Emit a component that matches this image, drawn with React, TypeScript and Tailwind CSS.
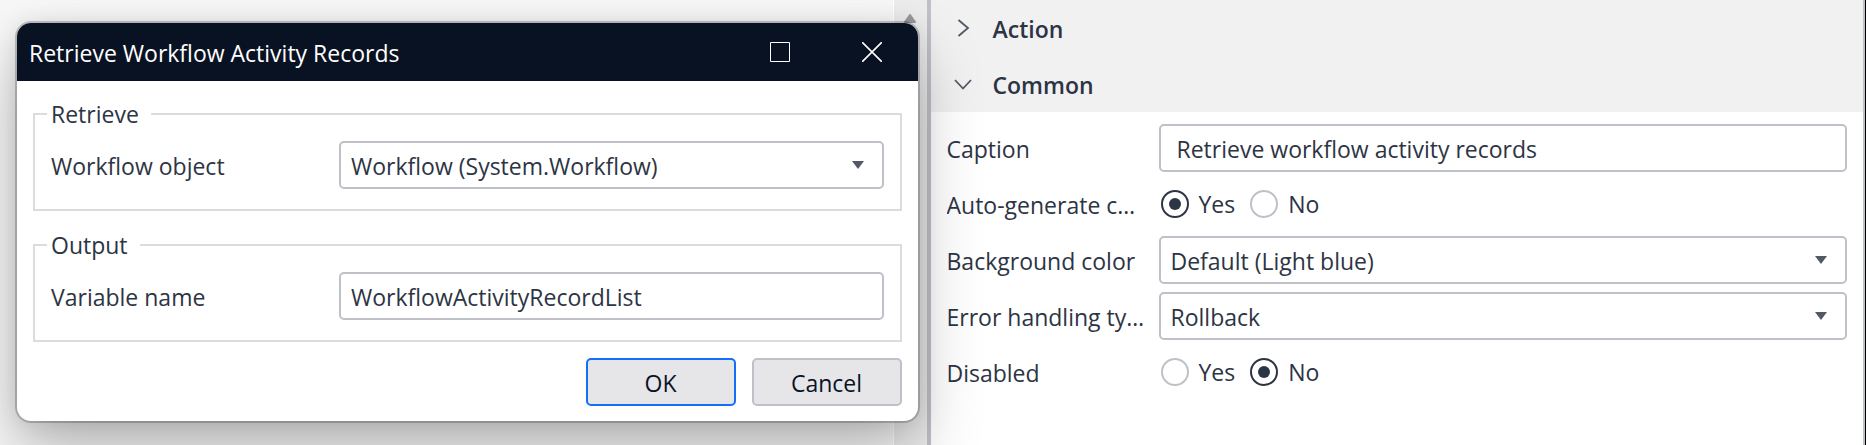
import { useState, type ReactNode } from "react";

function CaretDown() {
  return (
    <svg className="pointer-events-none col-start-1 row-start-1 mr-5 self-center justify-self-end" width="12" height="8" viewBox="0 0 12 8" aria-hidden="true">
      <path d="M0 0H12L6 8Z" fill="#525866" />
    </svg>
  );
}

function SelectBox({ id, options }: { id: string; options: string[] }) {
  return (
    <div className="grid min-w-0 flex-1">
      <select
        id={id}
        className="col-start-1 row-start-1 h-12 w-full appearance-none rounded-[5px] border-2 border-[#c0c0c8] bg-white pt-0.5 pr-10 pl-[10px] leading-8"
      >
        {options.map((o) => (
          <option key={o}>{o}</option>
        ))}
      </select>
      <CaretDown />
    </div>
  );
}

function TextBox({ id, value, padding }: { id: string; value: string; padding: string }) {
  return (
    <input
      id={id}
      type="text"
      defaultValue={value}
      className={`h-12 w-full min-w-0 flex-1 rounded-[5px] border-2 border-[#c0c0c8] bg-white pt-0.5 leading-8 ${padding}`}
    />
  );
}

function Group({ title, children }: { title: string; children: ReactNode }) {
  return (
    <fieldset className="min-w-0 border-2 border-[#dcdcdc] pr-4 pb-5 pl-3">
      <legend className="pr-3 pl-1 leading-[34px]">{title}</legend>
      <div className="mt-[10px] flex items-center pl-1">{children}</div>
    </fieldset>
  );
}

function RetrieveDialog() {
  return (
    <div
      role="dialog"
      aria-labelledby="dialog-title"
      className="absolute top-[23px] right-[9px] left-[17px] z-10 overflow-hidden rounded-[14px] bg-white shadow-[0_0_0_2px_rgba(0,0,0,0.2),0_32px_64px_rgba(0,0,0,0.26),0_2px_24px_rgba(0,0,0,0.12)]"
    >
      <header className="flex h-[58px] items-center bg-[#091222] pr-9 pl-3 text-white">
        <h1 id="dialog-title" className="flex-1 pt-0.5 leading-8">Retrieve Workflow Activity Records</h1>
        <button type="button" aria-label="Maximize" className="mr-[72px]">
          <svg width="20" height="20" viewBox="0 0 20 20" fill="none" stroke="currentColor">
            <path d="M.5 .5H19.5V19.5H.5Z" />
          </svg>
        </button>
        <button type="button" aria-label="Close">
          <svg width="20" height="20" viewBox="0 0 20 20" fill="none" stroke="currentColor" strokeWidth="1.6">
            <path d="M0 0L20 20M20 0L0 20" />
          </svg>
        </button>
      </header>
      <form className="flex flex-col px-4 pt-4 pb-[15px]" onSubmit={(e) => e.preventDefault()}>
        <div className="flex flex-col gap-[17px]">
          <Group title="Retrieve">
            <label htmlFor="workflow-object" className="w-72 shrink-0 pt-0.5">Workflow object</label>
            <SelectBox id="workflow-object" options={["Workflow (System.Workflow)"]} />
          </Group>
          <Group title="Output">
            <label htmlFor="variable-name" className="w-72 shrink-0 pt-0.5">Variable name</label>
            <TextBox id="variable-name" value="WorkflowActivityRecordList" padding="px-[10px]" />
          </Group>
        </div>
        <div className="mt-4 flex justify-end gap-4 leading-8 text-[#0a1325]">
          <button type="submit" className="h-12 w-[150px] rounded-[5px] border-2 border-[#146ff8] bg-[#e6e6e9] pt-0.5">OK</button>
          <button type="button" className="h-12 w-[150px] rounded-[5px] border-2 border-[#c0c0c8] bg-[#e6e6e9] pt-0.5">Cancel</button>
        </div>
      </form>
    </div>
  );
}

function SectionHeader({ title, open }: { title: string; open: boolean }) {
  return (
    <button type="button" aria-expanded={open} className="flex h-14 w-full items-center bg-[#f1f1f1] pl-[23px] text-left font-semibold">
      <svg width="18" height="18" viewBox="0 0 18 18" fill="none" stroke="#525866" strokeWidth="1.8" aria-hidden="true">
        <path d={open ? "M1 5L9 13.5L17 5" : "M4.5 1L14 9L4.5 17"} />
      </svg>
      <span className="pt-0.5 pl-[21px]">{title}</span>
    </button>
  );
}

function PropertyRow({ label, htmlFor, children }: { label: string; htmlFor?: string; children: ReactNode }) {
  const text = "w-[200px] shrink-0 truncate pt-0.5 leading-8";
  return (
    <div className="flex h-14 items-center">
      <div className="flex w-[212px] shrink-0">
        {htmlFor ? (
          <label htmlFor={htmlFor} className={text}>{label}</label>
        ) : (
          <span className={text}>{label}</span>
        )}
      </div>
      {children}
    </div>
  );
}

function YesNo({ name, initial }: { name: string; initial: string }) {
  const [value, setValue] = useState(initial);
  return (
    <div role="radiogroup" aria-label={name} className="flex gap-[15px] pl-[2px]">
      {["Yes", "No"].map((option) => (
        <label key={option} className="flex items-center gap-[10px]">
          <input
            type="radio"
            name={name}
            checked={value === option}
            onChange={() => setValue(option)}
            className="grid size-7 appearance-none place-items-center rounded-full border-2 border-[#c0c0c8] bg-white before:size-3 before:rounded-full checked:border-[#2d3444] checked:before:bg-[#2d3444]"
          />
          <span className="leading-8">{option}</span>
        </label>
      ))}
    </div>
  );
}

export default function App() {
  return (
    <div className="flex min-h-screen overflow-hidden bg-white font-['Open_Sans','Noto_Sans',sans-serif] text-[23px] text-[#2d3444]">
      <main className="relative flex min-h-[445px] flex-[927] bg-[#f7f7f7]">
        <div className="flex-1 border-r border-white" />
        <div className="flex w-[33px] justify-center bg-[#ececec] pt-[14px]">
          <svg width="12" height="9" viewBox="0 0 12 9" aria-hidden="true">
            <path d="M6 1L11 8H1Z" fill="#999" stroke="#999" strokeWidth="2" strokeLinejoin="round" />
          </svg>
        </div>
        <RetrieveDialog />
      </main>
      <aside className="flex-[939] border-r border-black">
        <div className="h-full border-r-2 border-l-4 border-r-[#c0c0c8] border-l-[#c0c0c8]">
          <SectionHeader title="Action" open={false} />
          <SectionHeader title="Common" open />
          <div className="px-4 pt-2">
            <PropertyRow label="Caption" htmlFor="caption">
              <TextBox id="caption" value="Retrieve workflow activity records" padding="px-4" />
            </PropertyRow>
            <PropertyRow label="Auto-generate caption">
              <YesNo name="Auto-generate caption" initial="Yes" />
            </PropertyRow>
            <PropertyRow label="Background color" htmlFor="background-color">
              <SelectBox id="background-color" options={["Default (Light blue)"]} />
            </PropertyRow>
            <PropertyRow label="Error handling type" htmlFor="error-handling">
              <SelectBox id="error-handling" options={["Rollback"]} />
            </PropertyRow>
            <PropertyRow label="Disabled">
              <YesNo name="Disabled" initial="No" />
            </PropertyRow>
          </div>
        </div>
      </aside>
    </div>
  );
}
